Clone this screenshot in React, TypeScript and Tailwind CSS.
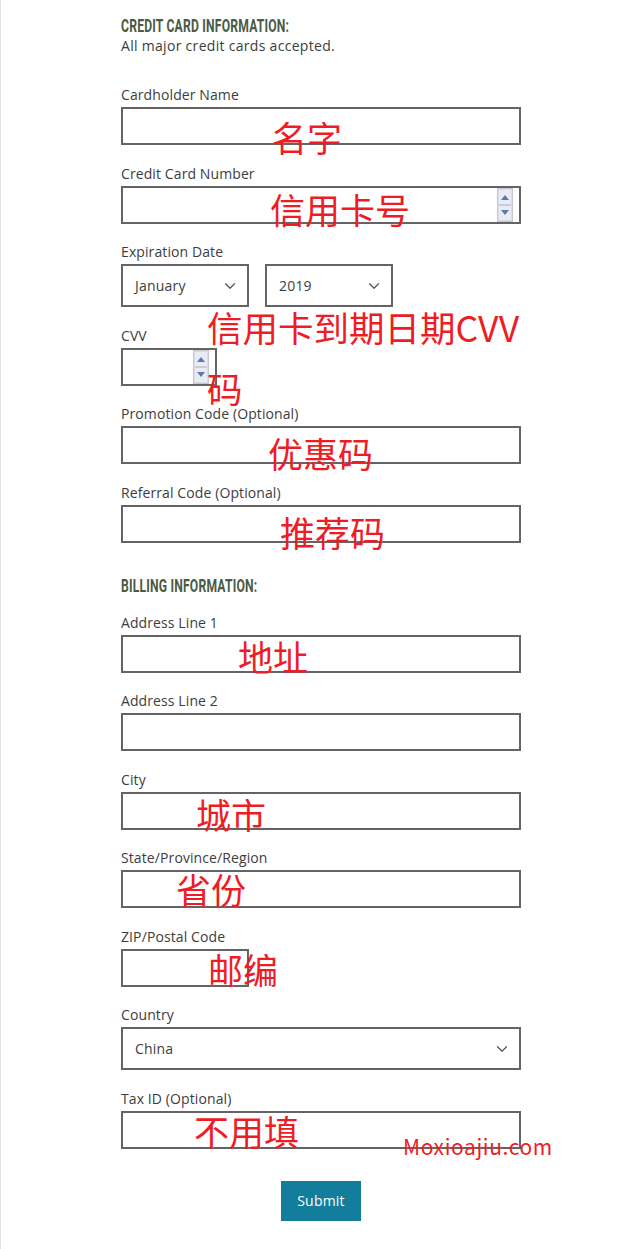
import { ChevronDown } from "lucide-react";

const body = { fontFamily: '"Open Sans", "Noto Sans", sans-serif' };
const cjk = { fontFamily: '"Noto Sans CJK SC", "Noto Sans", sans-serif' };

function Heading({ children, className = "" }: { children: string; className?: string }) {
  return (
    <h2
      className={`h-5 overflow-visible whitespace-nowrap text-[19px] font-bold uppercase leading-5 text-[#4a5a44] ${className}`}
      style={{ fontFamily: "Roboto, sans-serif" }}
    >
      <span className="inline-block origin-left scale-x-[0.64] tracking-[0.3px]">{children}</span>
    </h2>
  );
}

function Spinner() {
  return (
    <svg width="16" height="34" viewBox="0 0 16 34" className="shrink-0">
      <rect x="0.5" y="0.5" width="15" height="33" fill="#d9dde5" stroke="#c4c8d0" />
      <rect x="2" y="2" width="12" height="14" fill="#e9ecf2" />
      <rect x="2" y="18" width="12" height="14" fill="#e9ecf2" />
      <path d="M4 12 L8 7 L12 12 Z" fill="#5b78b8" />
      <path d="M4 22 L8 27 L12 22 Z" fill="#5b78b8" />
      <line x1="2" y1="17" x2="14" y2="17" stroke="#b9bec8" />
    </svg>
  );
}

function FieldLabel({ children }: { children: string }) {
  return <label className="block h-[22px] text-[14px] leading-5 tracking-[0.1px] text-[#3d3d3d]">{children}</label>;
}

function TextField({
  label,
  width = "w-[400px]",
  spinner = false,
  first = false,
}: {
  label: string;
  width?: string;
  spinner?: boolean;
  first?: boolean;
}) {
  return (
    <div className={first ? "" : "mt-[18.5px]"}>
      <FieldLabel>{label}</FieldLabel>
      <div className={`flex h-[38px] items-center justify-end border-2 border-[#646464] bg-white pr-[6px] ${width}`}>
        {spinner && <Spinner />}
      </div>
    </div>
  );
}

function FakeSelect({ value, width }: { value: string; width: string }) {
  return (
    <div
      className={`flex h-[43px] items-center justify-between border-2 border-[#646464] bg-white pl-[12px] pr-[8px] text-[14px] tracking-[0.2px] text-[#3d3d3d] ${width}`}
    >
      <span>{value}</span>
      <ChevronDown size={18} strokeWidth={1.6} color="#555" />
    </div>
  );
}

function Note({
  text,
  left,
  top,
  size = "text-[35px] leading-none",
  width,
}: {
  text: string;
  left: number;
  top: number;
  size?: string;
  width?: number;
}) {
  return (
    <div className={`pointer-events-none absolute text-[#ee1c25] ${size}`} style={{ ...cjk, left, top, width }}>
      {text}
    </div>
  );
}

export default function App() {
  return (
    <div className="relative min-h-[1249px] border-l border-[#e2e2e2] bg-white" style={body}>
      <form className="ml-[120px] w-[400px] pt-4">
        <Heading>Credit Card Information:</Heading>
        <p className="h-5 text-[14px] leading-5 tracking-[0.3px] text-[#3d3d3d]">All major credit cards accepted.</p>

        <div className="mt-[29px]">
          <TextField label="Cardholder Name" first />
          <TextField label="Credit Card Number" spinner />

          <div className="mt-[18.5px]">
            <FieldLabel>Expiration Date</FieldLabel>
            <div className="flex gap-4">
              <FakeSelect value="January" width="w-[128px]" />
              <FakeSelect value="2019" width="w-[128px]" />
            </div>
          </div>

          <TextField label="CVV" width="w-[96px]" spinner />
          <TextField label="Promotion Code (Optional)" />
          <TextField label="Referral Code (Optional)" />
        </div>

        <Heading className="mt-[33px]">Billing Information:</Heading>

        <div className="mt-[17px]">
          <TextField label="Address Line 1" first />
          <TextField label="Address Line 2" />
          <TextField label="City" />
          <TextField label="State/Province/Region" />
          <TextField label="ZIP/Postal Code" width="w-[128px]" />

          <div className="mt-[18.5px]">
            <FieldLabel>Country</FieldLabel>
            <FakeSelect value="China" width="w-[400px]" />
          </div>

          <TextField label="Tax ID (Optional)" />
        </div>

        <div className="mt-8 flex justify-center">
          <button type="button" className="h-10 w-20 bg-[#137d9c] text-[14px] tracking-[0.2px] text-white">
            Submit
          </button>
        </div>
      </form>

      <Note text="名字" left={271} top={119} />
      <Note text="信用卡号" left={269} top={191} />
      <Note
        text="信用卡到期日期CVV码"
        left={206}
        top={296}
        width={322}
        size="text-[35.5px] leading-[61px]"
      />
      <Note text="优惠码" left={267} top={435} />
      <Note text="推荐码" left={279} top={514} />
      <Note text="地址" left={237} top={638} />
      <Note text="城市" left={195} top={796} />
      <Note text="省份" left={175} top={871} />
      <Note text="邮编" left={207} top={951} />
      <Note text="不用填" left={193} top={1113} />
      <Note text="Moxioajiu.com" left={402} top={1136} size="text-[21px] leading-none tracking-[0.6px]" />
    </div>
  );
}
